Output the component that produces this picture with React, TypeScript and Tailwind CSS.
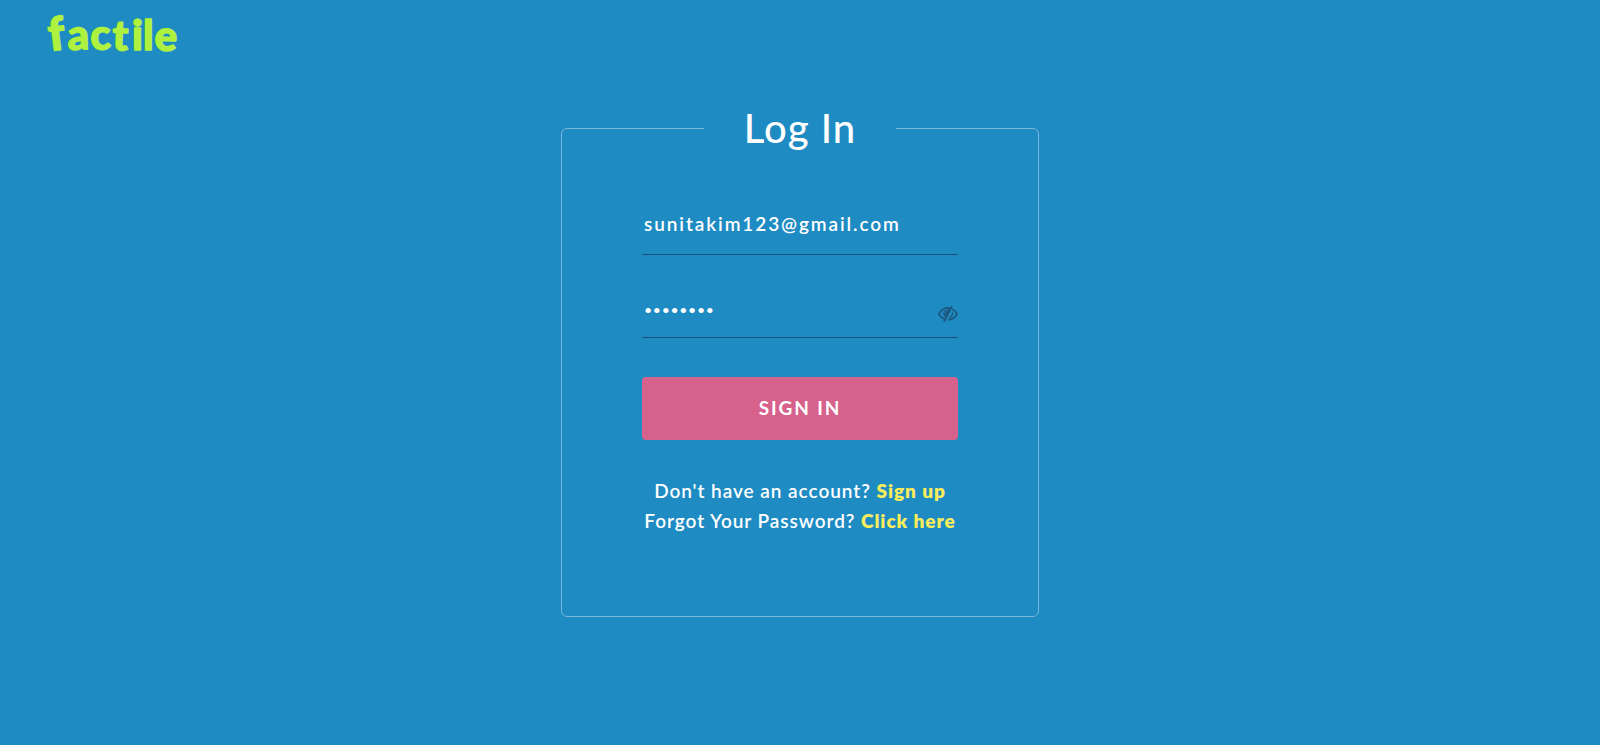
import { useState } from "react";

function Logo() {
  return (
    <svg
      width="140"
      height="56"
      viewBox="-4 -4 140 56"
      className="overflow-visible"
      role="img"
      aria-label="factile"
      fill="#aef23f"
      stroke="#aef23f"
      strokeWidth="1.4"
      strokeLinejoin="round"
      fontFamily="Lato, sans-serif"
      fontWeight="900"
    >
      <text x="2" y="39" rotate="-7" fontSize="46">
        f
      </text>
      <text
        x="20 43 64 84 95 106"
        y="38 38 38 38 38 38"
        rotate="-2 -3 2 0 0 3"
        fontSize="42"
      >
        actile
      </text>
    </svg>
  );
}

function HiddenEyeIcon() {
  return (
    <svg
      width="20"
      height="16"
      viewBox="0 0 20 16"
      fill="none"
      stroke="currentColor"
      strokeWidth="1.5"
      strokeLinecap="round"
      aria-hidden="true"
    >
      <path d="M12 2.2C7.4 1 3.6 3.300.8 8c1.500 2.500 3.200 4.100 5.300 5" />
      <path d="M14.800 3.400C16.600 4.400 18 6 19.200 8c-2.300 3.800-5.200 5.700-8.700 5.800" />
      <path d="M13.600.900 6.300 15" strokeWidth="1.800" />
      <path d="M11.300 4.100C8 3 5 5.300 5.700 8.500c.2 1.200.8 2 1.700 2.700z" fill="currentColor" strokeWidth=".6" />
      <path d="M8.900 4.900C7.600 5.300 7 6.200 7 7.300" stroke="#1f8bc3" strokeWidth=".8" />
      <path d="M14.400 6.200c.3 2.400-.7 4.200-2.700 5.200" strokeWidth="1.200" />
    </svg>
  );
}

export default function App() {
  const [email, setEmail] = useState("sunitakim123@gmail.com");
  const [password, setPassword] = useState("password");
  const [visible, setVisible] = useState(false);

  return (
    <div className="min-h-screen bg-[#1f8bc3] font-['Lato',sans-serif] text-white">
      <header className="px-11 pt-2">
        <a href="#home" className="inline-block align-top">
          <Logo />
        </a>
      </header>

      <main className="flex justify-center px-4 pt-10 pb-32">
        <form onSubmit={(event) => event.preventDefault()}>
          <fieldset className="rounded-md border border-[#79b7da] px-20 pb-20">
            <legend className="mx-auto px-10 text-center text-[40px] leading-12 font-medium tracking-wide">
              Log In
            </legend>

            <div className="mt-10 flex w-79 max-w-full flex-col">
              <input
                type="email"
                aria-label="Email"
                autoComplete="email"
                value={email}
                onChange={(event) => setEmail(event.target.value)}
                className="h-[63px] w-full border-b border-[#1a5478] bg-transparent px-0.5 text-[19px] font-semibold tracking-widest outline-none"
              />

              <div className="mt-5 flex h-[63px] items-center border-b border-[#1a5478] pt-2">
                <input
                  type={visible ? "text" : "password"}
                  aria-label="Password"
                  autoComplete="current-password"
                  value={password}
                  onChange={(event) => setPassword(event.target.value)}
                  className="min-w-0 flex-1 bg-transparent px-0.5 text-sm tracking-wider outline-none"
                />
                <button
                  type="button"
                  aria-label="Toggle password visibility"
                  onClick={() => setVisible(!visible)}
                  className="pt-2 text-[#1d567c]"
                >
                  <HiddenEyeIcon />
                </button>
              </div>

              <button
                type="submit"
                className="mt-[39px] h-[63px] rounded bg-[#d6628c] text-[19px] font-bold tracking-widest"
              >
                SIGN IN
              </button>

              <div className="mt-9 text-center text-[19px] leading-[30px] font-semibold tracking-wider whitespace-nowrap">
                <p>
                  Don't have an account?{" "}
                  <a href="#signup" className="font-extrabold text-[#f9ed5b]">
                    Sign up
                  </a>
                </p>
                <p>
                  Forgot Your Password?{" "}
                  <a href="#reset" className="font-extrabold text-[#f9ed5b]">
                    Click here
                  </a>
                </p>
              </div>
            </div>
          </fieldset>
        </form>
      </main>
    </div>
  );
}
